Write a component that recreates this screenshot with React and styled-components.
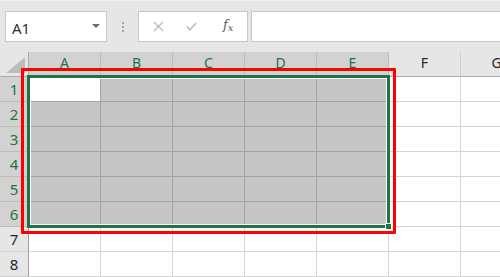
import React from "react";
import styled, { createGlobalStyle } from "styled-components";

const GlobalStyle = createGlobalStyle`
  html, body {
    margin: 0;
    padding: 0;
    background: #ffffff;
  }
  body {
    width: 500px;
    height: 277px;
    overflow: hidden;
    font-family: "Noto Sans", "Liberation Sans", sans-serif;
  }
`;

const GREEN = "#217346";
const COLS = ["A", "B", "C", "D", "E", "F", "G"];
const ROWS = [1, 2, 3, 4, 5, 6, 7, 8];
const SEL_COLS = 5;
const SEL_ROWS = 6;

export default function App() {
  return (
    <>
      <GlobalStyle />
      <Page>
        <Toolbar>
          <NameBox>
            <span>A1</span>
            <Caret />
          </NameBox>
          <Grip>
            <i />
            <i />
            <i />
          </Grip>
          <FxBox>
            <ToolIcon>
              <svg width="11" height="11" viewBox="0 0 11 11">
                <path d="M1 1 L10 10 M10 1 L1 10" stroke="#bdbdbd" strokeWidth="1.4" fill="none" />
              </svg>
            </ToolIcon>
            <ToolIcon>
              <svg width="13" height="11" viewBox="0 0 13 11">
                <path d="M1 5.5 L4.6 9.4 L12 1.4" stroke="#bdbdbd" strokeWidth="2" fill="none" />
              </svg>
            </ToolIcon>
            <FxLabel>
              f<sub>x</sub>
            </FxLabel>
          </FxBox>
          <FormulaInput />
        </Toolbar>

        <Sheet>
          <Grid>
            <Corner>
              <svg width="19" height="16" viewBox="0 0 19 16">
                <polygon points="19,0 19,16 0,16" fill="#bcbcbc" />
              </svg>
            </Corner>
            {COLS.map((c, i) => (
              <ColHead key={c} $sel={i < SEL_COLS}>
                {c}
              </ColHead>
            ))}
            {ROWS.map((r, ri) => (
              <React.Fragment key={r}>
                <RowHead $sel={ri < SEL_ROWS}>{r}</RowHead>
                {COLS.map((c, ci) => {
                  const inSel = ri < SEL_ROWS && ci < SEL_COLS;
                  return (
                    <Cell
                      key={c + r}
                      $sel={inSel}
                      $active={ri === 0 && ci === 0}
                    />
                  );
                })}
              </React.Fragment>
            ))}
          </Grid>
          <Selection />
          <FillHandle />
          <Highlight />
        </Sheet>
      </Page>
    </>
  );
}

const Page = styled.div`
  width: 500px;
  height: 277px;
  display: flex;
  flex-direction: column;
  overflow: hidden;
`;

const Toolbar = styled.div`
  height: 52px;
  box-sizing: border-box;
  background: #e6e6e6;
  border-top: 1px solid #f0f0f0;
  padding: 10px 0 0 5px;
  display: flex;
  align-items: flex-start;
`;

const Field = styled.div`
  height: 31px;
  box-sizing: border-box;
  background: #ffffff;
  border: 1px solid #c6c6c6;
`;

const NameBox = styled(Field)`
  width: 102px;
  display: flex;
  align-items: center;
  justify-content: space-between;
  padding: 0 6px 0 6px;
  font-size: 15px;
  color: #333333;
  span {
    padding-top: 2px;
  }
`;

const Caret = styled.div`
  width: 0;
  height: 0;
  border-left: 4px solid transparent;
  border-right: 4px solid transparent;
  border-top: 4px solid #6e6e6e;
  margin-top: -2px;
`;

const Grip = styled.div`
  width: 31px;
  height: 31px;
  display: flex;
  flex-direction: column;
  align-items: center;
  justify-content: center;
  gap: 2px;
  i {
    width: 2px;
    height: 2px;
    background: #a6a6a6;
  }
`;

const FxBox = styled(Field)`
  width: 110px;
  display: flex;
  align-items: center;
  padding-left: 14px;
  gap: 22px;
`;

const ToolIcon = styled.div`
  width: 11px;
  display: flex;
  align-items: center;
  justify-content: center;
`;

const FxLabel = styled.div`
  font-family: "DejaVu Serif", "Liberation Serif", serif;
  font-style: italic;
  font-size: 13px;
  color: #5a5a5a;
  margin-left: 4px;
  margin-top: -3px;
  sub {
    font-size: 10px;
    vertical-align: -2px;
  }
`;

const FormulaInput = styled(Field)`
  flex: 1;
  margin-left: 3px;
  border-right: none;
`;

const Sheet = styled.div`
  position: relative;
  flex: 1;
  overflow: hidden;
`;

const Grid = styled.div`
  display: grid;
  grid-template-columns: 29px repeat(7, 72px);
  grid-template-rows: repeat(9, 25px);
  font-family: "Noto Sans", "Liberation Sans", sans-serif;
`;

const Corner = styled.div`
  background: #e6e6e6;
  border-right: 1px solid #ababab;
  border-bottom: 1px solid #ababab;
  display: flex;
  align-items: flex-end;
  justify-content: flex-end;
  padding: 0 3px 3px 0;
`;

const Head = styled.div`
  box-sizing: border-box;
  display: flex;
  align-items: center;
  justify-content: center;
  font-size: 14px;
  background: ${(p) => (p.$sel ? "#d2d2d2" : "#e6e6e6")};
  color: ${(p) => (p.$sel ? GREEN : "#262626")};
`;

const ColHead = styled(Head)`
  border-right: 1px solid ${(p) => (p.$sel ? "#bcbcbc" : "#cfcfcf")};
  border-bottom: 1px solid #ababab;
  padding-bottom: 3px;
`;

const RowHead = styled(Head)`
  font-size: 15px;
  border-right: 1px solid #9f9f9f;
  border-bottom: 1px solid ${(p) => (p.$sel ? "#bcbcbc" : "#cfcfcf")};
`;

const Cell = styled.div`
  box-sizing: border-box;
  background: ${(p) => (p.$sel && !p.$active ? "#c6c6c6" : "#ffffff")};
  border-right: 1px solid ${(p) => (p.$sel ? "#a3a3a3" : "#d4d4d4")};
  border-bottom: 1px solid ${(p) => (p.$sel ? "#a3a3a3" : "#d4d4d4")};
`;

const Selection = styled.div`
  position: absolute;
  left: 27px;
  top: 23px;
  width: 363px;
  height: 153px;
  box-sizing: border-box;
  border: 3px solid ${GREEN};
  box-shadow: inset 0 0 0 1px #ffffff;
  pointer-events: none;
`;

const FillHandle = styled.div`
  position: absolute;
  left: 385px;
  top: 171px;
  width: 5px;
  height: 5px;
  background: ${GREEN};
  border: 1px solid #ffffff;
`;

const Highlight = styled.div`
  position: absolute;
  left: 21px;
  top: 16px;
  width: 375px;
  height: 166px;
  box-sizing: border-box;
  border: 3px solid #ff0000;
  border-radius: 1px;
  pointer-events: none;
`;
